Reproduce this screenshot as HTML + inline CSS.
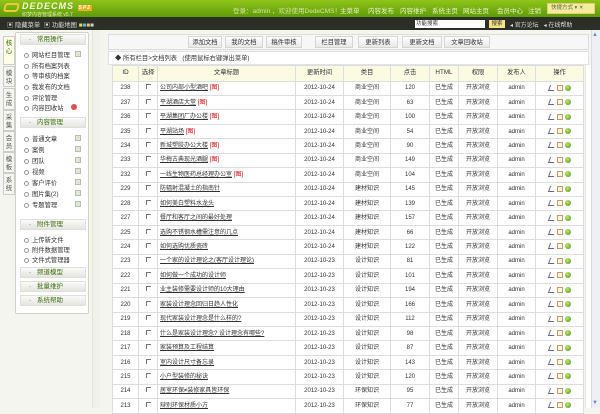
<!DOCTYPE html>
<html><head><meta charset="utf-8"><style>
*{margin:0;padding:0;box-sizing:border-box}
body{width:600px;height:408px;overflow:hidden;background:#f4f5ef;font-family:"Liberation Sans","Noto Sans CJK SC",sans-serif;font-size:7px;color:#333;position:relative}
.a{position:absolute;white-space:nowrap}
#top{left:0;top:0;width:600px;height:17px;background:linear-gradient(#8fc41a,#5f9a08)}
#bar{left:0;top:17px;width:600px;height:13px;background:#2c2f26}
.nav{color:#e8f5c8;font-size:6.5px;top:5px}
.tab{left:3px;width:12px;background:#f6f6f0;border:1px solid #ccc;font-size:6.5px;line-height:8px;text-align:center;padding-top:3px;color:#555;white-space:normal}
#panel{left:15px;top:32px;width:74px;height:282px;background:#fff;border:1px solid #cfd3c6;border-radius:2px}
.hd{left:20px;width:66px;height:11px;background:linear-gradient(#fafafa,#e4e4df);border:1px solid #e0e0da;font-size:6.5px;line-height:10px;padding-left:8px;color:#3e6e0a}
.hd:before{content:"- ";color:#999;margin-right:4px}
.it{left:24px;font-size:6.3px;color:#333}
.it:before{content:"";display:inline-block;width:3px;height:3px;border:1px solid #999;border-radius:50%;margin-right:3px;vertical-align:middle}
.pl{left:75px;width:6px;height:6px;background:#dfe8d0;border:1px solid #bbb}
#tool{left:108px;top:34px;width:481px;height:16px;background:#f7f7f7;border:1px solid #ddd}
.btn{top:36px;height:12px;background:linear-gradient(#fff,#e8e8e8);border:1px solid #d6d6d6;font-size:6.3px;line-height:11px;text-align:center}
#tt{left:108px;top:51px;width:481px;height:14px;background:#fff;border:1px solid #e2e2e2;font-size:6.3px;line-height:13px;padding-left:6px}
table{position:absolute;left:112px;top:65px;border-collapse:collapse;table-layout:fixed;width:471px;background:#fff}
td{border:1px solid #dedede;height:14.45px;font-size:6px;line-height:8px;text-align:center;white-space:nowrap;overflow:hidden;padding:0}
tr.h td{background:#fbfbe4;height:15.5px;font-size:6.3px}
td.t{text-align:left;padding-left:2px}
td.t u{color:#333}
.p{color:#c00}
.cb{display:inline-block;width:5px;height:5px;border-left:1px solid #777;border-top:1px solid #777}
.ic{display:inline-block;width:6px;height:6px;margin:0 1px;vertical-align:middle}
.i1{border-bottom:1px solid #668;border-left:1px solid #668;transform:skewX(-20deg)}
.i2{border:1px solid #c96;background:#fff7e6}
.i3{border-radius:50%;background:radial-gradient(circle at 40% 35%,#bfe870,#4b8f10)}
</style></head><body>
<div class="a" id="top"></div>
<div class="a" style="left:4px;top:3px;width:15px;height:9px;border:2px solid #f0c93a;border-radius:3px;transform:skewX(-15deg)"></div>
<div class="a" style="left:22px;top:1px;font:italic bold 9px 'Liberation Sans';color:#f2f7e0;letter-spacing:1px">DEDECMS <span style="font-size:5px;background:#e8b020;color:#fff;padding:0 1px">SP2</span></div>
<div class="a" style="left:22px;top:11px;font-size:5px;color:#e0ecb0">织梦内容管理系统 v5.7</div>
<div class="a nav" style="left:233px;color:#cfe4a0">登录：admin ，欢迎使用DedeCMS！</div>
<div class="a nav" style="left:340px">主菜单</div>
<div class="a nav" style="left:368px">内容发布</div>
<div class="a nav" style="left:400px">内容维护</div>
<div class="a nav" style="left:432px">系统主页</div>
<div class="a nav" style="left:463px">网站主页</div>
<div class="a nav" style="left:497px">会员中心</div>
<div class="a nav" style="left:528px">注销</div>
<div class="a" style="left:547px;top:3px;width:48px;height:11px;background:#f3eba0;border:1px solid #e0d070;font-size:5.5px;line-height:9px;padding-left:3px;color:#664;overflow:hidden">快捷方式 ▾ ✕</div>
<div class="a" id="bar"></div>
<div class="a" style="left:7px;top:20px;font-size:6.3px;color:#ddd">▣ 隐藏菜单 &nbsp;▣ 功能地图 <span style="color:#cde05a">■</span><span style="color:#5ab5e0">■</span><span style="color:#e0c080">■</span><span style="color:#ccc">■</span></div>
<div class="a" style="left:415px;top:20px;width:70px;height:8px;background:#fff;font-size:5.5px;line-height:8px;color:#333;padding-left:1px">功能搜索</div>
<div class="a" style="left:489px;top:20px;width:16px;height:8px;background:#f4e58a;font-size:5.5px;line-height:8px;text-align:center;color:#333">搜索</div>
<div class="a" style="left:510px;top:20px;font-size:6px;color:#ddd">◂ 官方论坛 &nbsp; ◂ 在线帮助</div>

<div class="a tab" style="top:36px;height:29px;background:#fffde8;color:#3e6e0a">核<br>心</div>
<div class="a tab" style="top:66px;height:21px">模<br>块</div>
<div class="a tab" style="top:88px;height:22px">生<br>成</div>
<div class="a tab" style="top:110px;height:21px">采<br>集</div>
<div class="a tab" style="top:131px;height:21px">会<br>员</div>
<div class="a tab" style="top:152px;height:21px">模<br>板</div>
<div class="a tab" style="top:173px;height:22px">系<br>统</div>

<div class="a" id="panel"></div>
<div class="a hd" style="top:34px">常用操作</div>
<div class="a it" style="top:50px">网站栏目管理</div><div class="a pl" style="top:51px"></div>
<div class="a it" style="top:61px">所有档案列表</div>
<div class="a it" style="top:71px">等审核的档案</div>
<div class="a it" style="top:82px">我发布的文档</div>
<div class="a it" style="top:93px">评论管理</div>
<div class="a it" style="top:103px">内容回收站</div><div class="a" style="left:71px;top:104px;width:6px;height:6px;border-radius:50%;background:#e05050"></div>
<div class="a hd" style="top:117px">内容管理</div>
<div class="a it" style="top:134px">普通文章</div><div class="a pl" style="top:135px"></div>
<div class="a it" style="top:145px">案例</div><div class="a pl" style="top:146px"></div>
<div class="a it" style="top:156px">团队</div><div class="a pl" style="top:157px"></div>
<div class="a it" style="top:167px">视频</div><div class="a pl" style="top:168px"></div>
<div class="a it" style="top:178px">客户评价</div><div class="a pl" style="top:179px"></div>
<div class="a it" style="top:189px">图片集(2)</div><div class="a pl" style="top:190px"></div>
<div class="a it" style="top:200px">专题管理</div><div class="a pl" style="top:201px"></div>
<div class="a hd" style="top:219px">附件管理</div>
<div class="a it" style="top:235px">上传新文件</div>
<div class="a it" style="top:245px">附件数据管理</div>
<div class="a it" style="top:255px">文件式管理器</div>
<div class="a hd" style="top:267px">频道模型</div>
<div class="a hd" style="top:281px">批量维护</div>
<div class="a hd" style="top:295px">系统帮助</div>
<div class="a" style="left:92px;top:30px;width:8px;height:378px;background:#f0f1ea;border-left:1px solid #e4e4dc"></div>

<div class="a" id="tool"></div>
<div class="a btn" style="left:188px;width:34px">添加文档</div>
<div class="a btn" style="left:225px;width:38px">我的文档</div>
<div class="a btn" style="left:266px;width:36px">稿件审核</div>
<div class="a btn" style="left:315px;width:38px">栏目管理</div>
<div class="a btn" style="left:358px;width:40px">更新列表</div>
<div class="a btn" style="left:402px;width:40px">更新文档</div>
<div class="a btn" style="left:444px;width:46px">文章回收站</div>
<div class="a" id="tt">◆ 所有栏目&gt;文档列表 &nbsp; (使用鼠标右键弹出菜单)</div>
<div class="a" style="left:591px;top:30px;width:9px;height:378px;background:#eef0f6;border-left:1px solid #d8dce8"></div>
<div class="a" style="left:592px;top:32px;font-size:6px;color:#6a8ac8">▲</div>
<div class="a" style="left:592px;top:400px;font-size:6px;color:#6a8ac8">▼</div>
<div class="a" style="left:585px;top:65px;width:6px;height:343px;background:#fff;border-left:1px solid #e8e8e8"></div>

<table>
<colgroup><col style="width:26px"><col style="width:19px"><col style="width:138px"><col style="width:48px"><col style="width:47px"><col style="width:39px"><col style="width:29px"><col style="width:39px"><col style="width:38px"><col style="width:48px"></colgroup>
<tr class="h"><td>ID</td><td>选择</td><td>文章标题</td><td>更新时间</td><td>类目</td><td>点击</td><td>HTML</td><td>权限</td><td>发布人</td><td>操作</td></tr>
<tr><td>238</td><td><i class="cb"></i></td><td class="t"><u>公司内部小型酒吧</u> <span class="p">[图]</span></td><td>2012-10-24</td><td>商业空间</td><td>120</td><td>已生成</td><td>开放浏览</td><td>admin</td><td><i class="ic i1"></i><i class="ic i2"></i><i class="ic i3"></i></td></tr>
<tr><td>237</td><td><i class="cb"></i></td><td class="t"><u>平湖酒店大堂</u> <span class="p">[图]</span></td><td>2012-10-24</td><td>商业空间</td><td>63</td><td>已生成</td><td>开放浏览</td><td>admin</td><td><i class="ic i1"></i><i class="ic i2"></i><i class="ic i3"></i></td></tr>
<tr><td>236</td><td><i class="cb"></i></td><td class="t"><u>平湖集团厂办公楼</u> <span class="p">[图]</span></td><td>2012-10-24</td><td>商业空间</td><td>100</td><td>已生成</td><td>开放浏览</td><td>admin</td><td><i class="ic i1"></i><i class="ic i2"></i><i class="ic i3"></i></td></tr>
<tr><td>235</td><td><i class="cb"></i></td><td class="t"><u>平湖站场</u> <span class="p">[图]</span></td><td>2012-10-24</td><td>商业空间</td><td>54</td><td>已生成</td><td>开放浏览</td><td>admin</td><td><i class="ic i1"></i><i class="ic i2"></i><i class="ic i3"></i></td></tr>
<tr><td>234</td><td><i class="cb"></i></td><td class="t"><u>新城塑胶办公大楼</u> <span class="p">[图]</span></td><td>2012-10-24</td><td>商业空间</td><td>90</td><td>已生成</td><td>开放浏览</td><td>admin</td><td><i class="ic i1"></i><i class="ic i2"></i><i class="ic i3"></i></td></tr>
<tr><td>233</td><td><i class="cb"></i></td><td class="t"><u>华梅古典现光酒腿</u> <span class="p">[图]</span></td><td>2012-10-24</td><td>商业空间</td><td>149</td><td>已生成</td><td>开放浏览</td><td>admin</td><td><i class="ic i1"></i><i class="ic i2"></i><i class="ic i3"></i></td></tr>
<tr><td>232</td><td><i class="cb"></i></td><td class="t"><u>一线生物医药总经理办公室</u> <span class="p">[图]</span></td><td>2012-10-24</td><td>商业空间</td><td>104</td><td>已生成</td><td>开放浏览</td><td>admin</td><td><i class="ic i1"></i><i class="ic i2"></i><i class="ic i3"></i></td></tr>
<tr><td>229</td><td><i class="cb"></i></td><td class="t"><u>防辐射混凝土的指南针</u></td><td>2012-10-24</td><td>建材知识</td><td>145</td><td>已生成</td><td>开放浏览</td><td>admin</td><td><i class="ic i1"></i><i class="ic i2"></i><i class="ic i3"></i></td></tr>
<tr><td>228</td><td><i class="cb"></i></td><td class="t"><u>如何美白塑料水龙头</u></td><td>2012-10-24</td><td>建材知识</td><td>139</td><td>已生成</td><td>开放浏览</td><td>admin</td><td><i class="ic i1"></i><i class="ic i2"></i><i class="ic i3"></i></td></tr>
<tr><td>227</td><td><i class="cb"></i></td><td class="t"><u>餐厅和客厅之间的最好处理</u></td><td>2012-10-24</td><td>建材知识</td><td>157</td><td>已生成</td><td>开放浏览</td><td>admin</td><td><i class="ic i1"></i><i class="ic i2"></i><i class="ic i3"></i></td></tr>
<tr><td>225</td><td><i class="cb"></i></td><td class="t"><u>选购不锈钢水槽需注意的几点</u></td><td>2012-10-24</td><td>建材知识</td><td>66</td><td>已生成</td><td>开放浏览</td><td>admin</td><td><i class="ic i1"></i><i class="ic i2"></i><i class="ic i3"></i></td></tr>
<tr><td>224</td><td><i class="cb"></i></td><td class="t"><u>如何选购优质瓷砖</u></td><td>2012-10-24</td><td>建材知识</td><td>122</td><td>已生成</td><td>开放浏览</td><td>admin</td><td><i class="ic i1"></i><i class="ic i2"></i><i class="ic i3"></i></td></tr>
<tr><td>223</td><td><i class="cb"></i></td><td class="t"><u>一个家的设计理论之(客厅设计理论)</u></td><td>2012-10-23</td><td>设计知识</td><td>81</td><td>已生成</td><td>开放浏览</td><td>admin</td><td><i class="ic i1"></i><i class="ic i2"></i><i class="ic i3"></i></td></tr>
<tr><td>222</td><td><i class="cb"></i></td><td class="t"><u>如何做一个成功的设计师</u></td><td>2012-10-23</td><td>设计知识</td><td>101</td><td>已生成</td><td>开放浏览</td><td>admin</td><td><i class="ic i1"></i><i class="ic i2"></i><i class="ic i3"></i></td></tr>
<tr><td>221</td><td><i class="cb"></i></td><td class="t"><u>业主装修需要设计师的10大理由</u></td><td>2012-10-23</td><td>设计知识</td><td>194</td><td>已生成</td><td>开放浏览</td><td>admin</td><td><i class="ic i1"></i><i class="ic i2"></i><i class="ic i3"></i></td></tr>
<tr><td>220</td><td><i class="cb"></i></td><td class="t"><u>家装设计理念回归日趋人性化</u></td><td>2012-10-23</td><td>设计知识</td><td>166</td><td>已生成</td><td>开放浏览</td><td>admin</td><td><i class="ic i1"></i><i class="ic i2"></i><i class="ic i3"></i></td></tr>
<tr><td>219</td><td><i class="cb"></i></td><td class="t"><u>现代家装设计理念是什么样的?</u></td><td>2012-10-23</td><td>设计知识</td><td>112</td><td>已生成</td><td>开放浏览</td><td>admin</td><td><i class="ic i1"></i><i class="ic i2"></i><i class="ic i3"></i></td></tr>
<tr><td>218</td><td><i class="cb"></i></td><td class="t"><u>什么是家装设计理念? 设计理念有哪些?</u></td><td>2012-10-23</td><td>设计知识</td><td>98</td><td>已生成</td><td>开放浏览</td><td>admin</td><td><i class="ic i1"></i><i class="ic i2"></i><i class="ic i3"></i></td></tr>
<tr><td>217</td><td><i class="cb"></i></td><td class="t"><u>家装预算及工程结算</u></td><td>2012-10-23</td><td>设计知识</td><td>87</td><td>已生成</td><td>开放浏览</td><td>admin</td><td><i class="ic i1"></i><i class="ic i2"></i><i class="ic i3"></i></td></tr>
<tr><td>216</td><td><i class="cb"></i></td><td class="t"><u>室内设计尺寸备忘录</u></td><td>2012-10-23</td><td>设计知识</td><td>143</td><td>已生成</td><td>开放浏览</td><td>admin</td><td><i class="ic i1"></i><i class="ic i2"></i><i class="ic i3"></i></td></tr>
<tr><td>215</td><td><i class="cb"></i></td><td class="t"><u>小户型装修的秘诀</u></td><td>2012-10-23</td><td>设计知识</td><td>120</td><td>已生成</td><td>开放浏览</td><td>admin</td><td><i class="ic i1"></i><i class="ic i2"></i><i class="ic i3"></i></td></tr>
<tr><td>214</td><td><i class="cb"></i></td><td class="t"><u>居室环保≠装修家具皆环保</u></td><td>2012-10-23</td><td>环保知识</td><td>95</td><td>已生成</td><td>开放浏览</td><td>admin</td><td><i class="ic i1"></i><i class="ic i2"></i><i class="ic i3"></i></td></tr>
<tr><td>213</td><td><i class="cb"></i></td><td class="t"><u>辩别环保材质小方</u></td><td>2012-10-23</td><td>环保知识</td><td>77</td><td>已生成</td><td>开放浏览</td><td>admin</td><td><i class="ic i1"></i><i class="ic i2"></i><i class="ic i3"></i></td></tr>
</table>
</body></html>
